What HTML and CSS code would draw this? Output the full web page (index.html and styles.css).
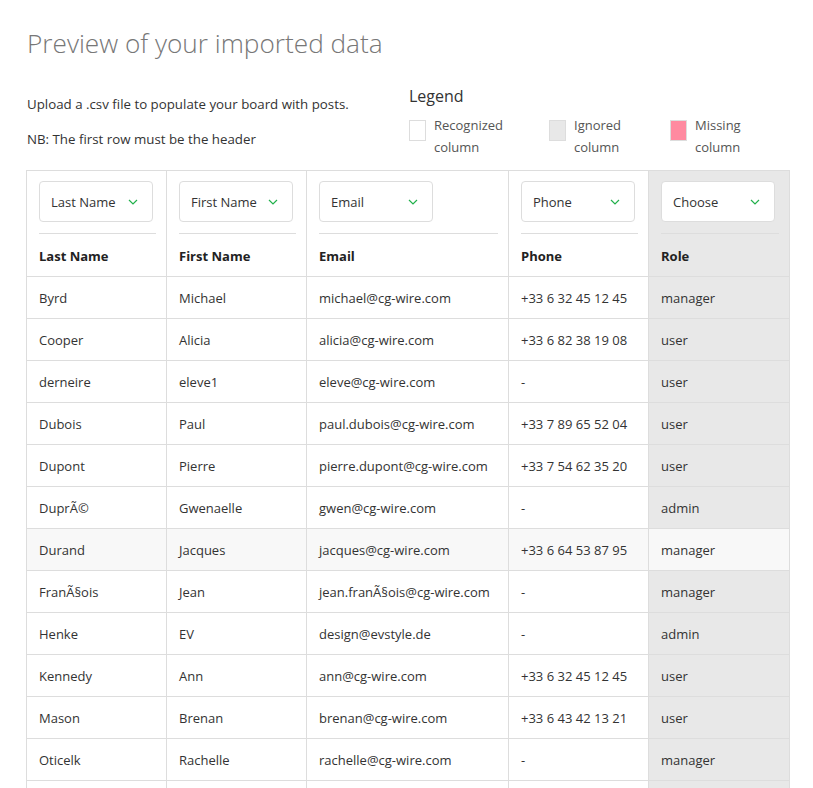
FILE: index.html
```html
<!DOCTYPE html>
<html>
<head>
<meta charset="utf-8">
<link rel="stylesheet" href="styles.css">
</head>
<body>
<div class="page">
  <h1 class="title">Preview of your imported data</h1>
  <div class="intro">
    <div class="explain">
      <p>Upload a .csv file to populate your board with posts.</p>
      <p>NB: The first row must be the header</p>
    </div>
    <div class="legend">
      <div class="legend-title">Legend</div>
      <div class="legend-items">
        <div class="legend-item"><span class="box box-recognized"></span><span class="legend-label">Recognized<br>column</span></div>
        <div class="legend-item item-ignored"><span class="box box-ignored"></span><span class="legend-label">Ignored<br>column</span></div>
        <div class="legend-item item-missing"><span class="box box-missing"></span><span class="legend-label">Missing<br>column</span></div>
      </div>
    </div>
  </div>

  <table class="data">
    <colgroup>
      <col class="c-narrow"><col class="c-narrow"><col class="c-wide"><col class="c-narrow"><col class="c-last">
    </colgroup>
    <thead>
      <tr>
        <th><div class="select-wrap"><div class="select"><span>Last Name</span><svg class="chev" viewBox="0 0 10 6" width="10" height="6"><path d="M1 1l4 4 4-4" fill="none" stroke="#22b14c" stroke-width="1.2"/></svg></div></div><div class="col-name">Last Name</div></th>
        <th><div class="select-wrap"><div class="select"><span>First Name</span><svg class="chev" viewBox="0 0 10 6" width="10" height="6"><path d="M1 1l4 4 4-4" fill="none" stroke="#22b14c" stroke-width="1.2"/></svg></div></div><div class="col-name">First Name</div></th>
        <th><div class="select-wrap"><div class="select"><span>Email</span><svg class="chev" viewBox="0 0 10 6" width="10" height="6"><path d="M1 1l4 4 4-4" fill="none" stroke="#22b14c" stroke-width="1.2"/></svg></div></div><div class="col-name">Email</div></th>
        <th><div class="select-wrap"><div class="select"><span>Phone</span><svg class="chev" viewBox="0 0 10 6" width="10" height="6"><path d="M1 1l4 4 4-4" fill="none" stroke="#22b14c" stroke-width="1.2"/></svg></div></div><div class="col-name">Phone</div></th>
        <th class="ignored"><div class="select-wrap"><div class="select"><span>Choose</span><svg class="chev" viewBox="0 0 10 6" width="10" height="6"><path d="M1 1l4 4 4-4" fill="none" stroke="#22b14c" stroke-width="1.2"/></svg></div></div><div class="col-name">Role</div></th>
      </tr>
    </thead>
    <tbody>
      <tr><td>Byrd</td><td>Michael</td><td>michael@cg-wire.com</td><td>+33 6 32 45 12 45</td><td class="ignored">manager</td></tr>
      <tr><td>Cooper</td><td>Alicia</td><td>alicia@cg-wire.com</td><td>+33 6 82 38 19 08</td><td class="ignored">user</td></tr>
      <tr><td>derneire</td><td>eleve1</td><td>eleve@cg-wire.com</td><td>-</td><td class="ignored">user</td></tr>
      <tr><td>Dubois</td><td>Paul</td><td>paul.dubois@cg-wire.com</td><td>+33 7 89 65 52 04</td><td class="ignored">user</td></tr>
      <tr><td>Dupont</td><td>Pierre</td><td>pierre.dupont@cg-wire.com</td><td>+33 7 54 62 35 20</td><td class="ignored">user</td></tr>
      <tr><td>DuprÃ©</td><td>Gwenaelle</td><td>gwen@cg-wire.com</td><td>-</td><td class="ignored">admin</td></tr>
      <tr class="hover"><td>Durand</td><td>Jacques</td><td>jacques@cg-wire.com</td><td>+33 6 64 53 87 95</td><td class="ignored">manager</td></tr>
      <tr><td>FranÃ§ois</td><td>Jean</td><td>jean.franÃ§ois@cg-wire.com</td><td>-</td><td class="ignored">manager</td></tr>
      <tr><td>Henke</td><td>EV</td><td>design@evstyle.de</td><td>-</td><td class="ignored">admin</td></tr>
      <tr><td>Kennedy</td><td>Ann</td><td>ann@cg-wire.com</td><td>+33 6 32 45 12 45</td><td class="ignored">user</td></tr>
      <tr><td>Mason</td><td>Brenan</td><td>brenan@cg-wire.com</td><td>+33 6 43 42 13 21</td><td class="ignored">user</td></tr>
      <tr><td>Oticelk</td><td>Rachelle</td><td>rachelle@cg-wire.com</td><td>-</td><td class="ignored">manager</td></tr>
      <tr class="tail"><td></td><td></td><td></td><td></td><td class="ignored"></td></tr>
    </tbody>
  </table>
</div>
</body>
</html>
```

FILE: styles.css
```css
* { box-sizing: border-box; }
html, body { margin: 0; padding: 0; background: #fff; }
body {
  font-family: "Open Sans", "Noto Sans", sans-serif;
  font-size: 13px;
  color: #333;
}
.page { padding: 0 0 0 27px; width: 813px; }
.title {
  margin: 0;
  padding-top: 25px;
  font-size: 26.2px;
  font-weight: 300;
  color: #777;
  line-height: 36px;
}
.intro { display: flex; margin-top: 24px; height: 85px; }
.explain { width: 382px; padding-top: 10px; font-size: 13.3px; }
.explain p { margin: 0 0 17px; line-height: 18px; }
.legend-title { font-size: 16px; line-height: 22px; color: #333; }
.legend-items { display: flex; margin-top: 7px; }
.legend-item { display: flex; align-items: flex-start; width: 140px; }
.item-ignored { width: 121px; }
.box { width: 17px; height: 21px; border: 1px solid #ddd; margin-top: 6px; flex: none; }
.box-recognized { background: #fff; }
.box-ignored { background: #e8e8e8; }
.box-missing { background: #ff8aa0; }
.legend-label { margin-left: 8px; line-height: 22px; color: #555; }

table.data {
  border-collapse: collapse;
  table-layout: fixed;
  width: 763px;
  margin-left: -1px;
}
.c-narrow { width: 140px; }
.c-wide { width: 202px; }
.c-last { width: 141px; }
table.data th, table.data td {
  border: 1px solid #ddd;
  padding: 0 10px 0 12px;
  text-align: left;
  vertical-align: middle;
}
table.data td { height: 42px; white-space: nowrap; overflow: hidden; }
table.data th { padding-top: 10px; vertical-align: top; }
.select-wrap { padding-bottom: 11px; border-bottom: 1px solid #ddd; }
.select {
  display: flex;
  align-items: center;
  justify-content: space-between;
  width: 114px;
  height: 41px;
  padding: 0 14px 0 11px;
  border: 1px solid #ddd;
  border-radius: 4px;
  background: #fff;
  font-weight: 400;
  color: #333;
}
.chev { flex: none; }
.col-name { height: 42px; line-height: 44px; font-weight: 700; color: #222; }
.ignored { background: #e8e8e8; }
tr.hover td { background: #f8f8f8; }
```
